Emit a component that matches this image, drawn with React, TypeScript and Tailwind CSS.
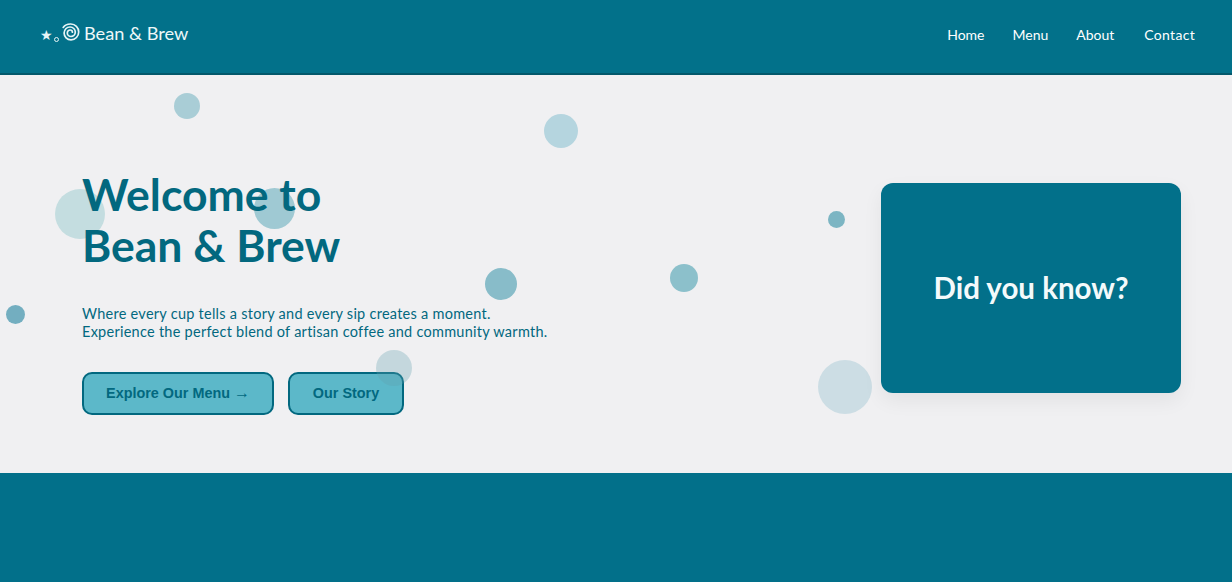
const bubbles = [
  { key: 'a', className: 'left-[174px] top-[93px] h-[26px] w-[26px] bg-[#a9cdd6]' },
  { key: 'b', className: 'left-[544px] top-[114px] h-[34px] w-[34px] bg-[#b5d5df]' },
  { key: 'c', className: 'left-[55px] top-[189px] h-[50px] w-[50px] bg-[#c4dde0]' },
  { key: 'd', className: 'left-[254px] top-[188px] h-[41px] w-[41px] bg-[#9fc9d3]' },
  { key: 'e', className: 'left-[485px] top-[268px] h-[32px] w-[32px] bg-[#88bcc9]' },
  { key: 'f', className: 'left-[670px] top-[264px] h-[28px] w-[28px] bg-[#8cc0cb]' },
  { key: 'g', className: 'left-[828px] top-[211px] h-[17px] w-[17px] bg-[#7cb5c3]' },
  { key: 'h', className: 'left-[6px] top-[305px] h-[19px] w-[19px] bg-[#73aec0]' },
  { key: 'i', className: 'left-[818px] top-[360px] h-[54px] w-[54px] bg-[#ccdde4]' },
]

function Spiral() {
  return (
    <svg width="18" height="18" viewBox="0 0 18 18" fill="none" stroke="#e6f4f6" strokeWidth="1.7" strokeLinecap="round">
      <path d="M1.2 4.4C3 1.9 5.8 0.9 8.8 1c4.4 0.2 7.9 3.6 7.9 8 0 4.3-3.4 7.8-7.7 7.8-3.9 0-6.9-3-6.9-6.8 0-3.4 2.6-6 5.9-6 3 0 5.3 2.3 5.3 5.1 0 2.5-1.9 4.4-4.3 4.4-2.1 0-3.7-1.6-3.7-3.6 0-1.6 1.2-2.9 2.8-2.9 1.3 0 2.3 1 2.3 2.2" />
    </svg>
  )
}

export default function App() {
  return (
    <div className="relative flex h-[582px] w-full flex-col overflow-hidden bg-[#f0f0f2] font-['Lato','Noto_Sans',sans-serif]">
      {/* Header */}
      <header className="flex h-[75px] items-center justify-between border-b-2 border-[#03586b] bg-[#02718a] pb-[4px] pl-[40px] pr-[37px] text-white">
        <div className="-mt-[2px] flex items-center">
          <span className="mt-[3px] text-[14px] leading-none text-[#e6f4f6]">★</span>
          <span className="ml-[1px] mt-[12px] h-[5px] w-[5px] rounded-full border border-[#e6f4f6]" />
          <span className="ml-[3px] mt-[-3px]"><Spiral /></span>
          <span className="ml-[4px] text-[18.2px] text-[#eef8f9]">Bean &amp; Brew</span>
        </div>
        <nav className="flex items-center gap-[28px] text-[14px]">
          <a>Home</a>
          <a>Menu</a>
          <a>About</a>
          <a className="ml-[2px] tracking-[0.3px]">Contact</a>
        </nav>
      </header>

      {/* Hero */}
      <main className="relative flex h-[398px] items-center justify-between pl-[82px] pr-[51px] pt-[28px]">
        {bubbles.map((b) => (
          <span key={b.key} className={`absolute rounded-full -translate-y-[75px] ${b.className}`} />
        ))}
        <div className="relative z-10 mt-[4px]">
          <h1 className="pt-[3px] text-[44.5px] font-bold leading-[51px] text-[#02687f]">
            Welcome to
            <br />
            Bean &amp; Brew
          </h1>
          <p className="mt-[35px] text-[14.5px] leading-[18px] tracking-[0.26px] text-[#02687f]">
            Where every cup tells a story and every sip creates a moment.
            <br />
            Experience the perfect blend of artisan coffee and community warmth.
          </p>
          <div className="mt-[31px] flex gap-[14px] font-['Liberation_Sans',sans-serif] text-[14.4px] font-bold text-[#02687f]">
            <button className="h-[43px] w-[192px] rounded-[10px] border-2 border-[#02687f] bg-[#5cb8c9] pb-[2px] leading-none">
              Explore Our Menu <span className="font-['Liberation_Serif',serif] text-[16px] font-normal leading-none">→</span>
            </button>
            <button className="h-[43px] w-[116px] rounded-[10px] border-2 border-[#02687f] bg-[#5cb8c9] leading-none">
              Our Story
            </button>
          </div>
        </div>
        <aside className="relative z-10 flex h-[210px] w-[300px] items-start justify-center rounded-[12px] bg-[#02708a] pt-[85px] shadow-[0_8px_20px_rgba(0,0,0,0.06)]">
          <h2 className="text-[29.5px] font-bold leading-[40px] text-[#f4fafb]">Did you know?</h2>
        </aside>
        <span className="absolute left-[376px] top-[275px] z-20 h-[36px] w-[36px] rounded-full bg-[#5f9eab]/30" />
      </main>

      {/* Footer */}
      <footer className="flex-1 bg-[#02708a]" />
    </div>
  )
}
